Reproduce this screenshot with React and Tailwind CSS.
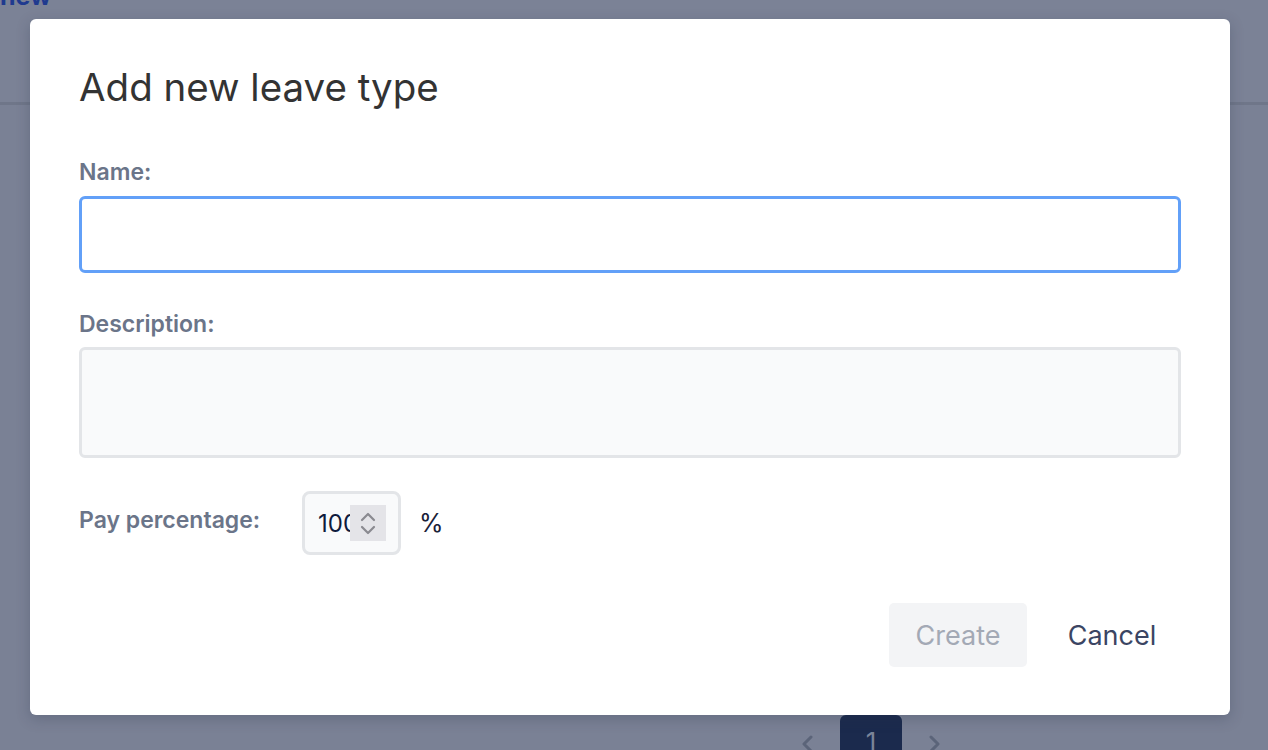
import React from "react";

function ChevronLeft({ className }) {
  return (
    <svg className={className} viewBox="0 0 24 24" fill="none" stroke="currentColor" strokeWidth="3" strokeLinecap="round" strokeLinejoin="round">
      <path d="M15 5l-7 7 7 7" />
    </svg>
  );
}
function ChevronRight({ className }) {
  return (
    <svg className={className} viewBox="0 0 24 24" fill="none" stroke="currentColor" strokeWidth="3" strokeLinecap="round" strokeLinejoin="round">
      <path d="M9 5l7 7-7 7" />
    </svg>
  );
}

export default function App() {
  return (
    <div className="relative w-[1268px] h-[750px] overflow-hidden bg-[#7a8195] font-['Inter',sans-serif]">
      {/* background page (dimmed) */}
      <div className="h-[105px] border-b-[3px] border-[#6f7689] bg-[#7b8296] flex flex-col">
        <div className="-mt-[19px] text-[25px] leading-[30px] font-bold text-[#1f3a8f]">new</div>
      </div>
      <div className="pt-[610px] pl-[796px] flex items-start">
        <ChevronLeft className="w-[24px] h-[24px] mt-[17px] text-[#5b6479]" />
        <div className="ml-[20px] w-[62px] h-[60px] rounded-t-[6px] bg-[#1b2a4d] flex justify-center pt-[12px] text-[26px] leading-[30px] text-[#7a8499]">1</div>
        <ChevronRight className="ml-[20px] w-[24px] h-[24px] mt-[17px] text-[#5b6479]" />
      </div>

      {/* modal */}
      <div className="absolute left-[30px] top-[19px] w-[1200px] h-[696px] bg-white rounded-[6px] shadow-[0_4px_14px_rgba(40,48,70,0.25)] px-[49px] pt-[45px] pb-[48px] flex flex-col">
        <h2 className="text-[38.5px] leading-[46px] text-[#333333] font-normal">Add new leave type</h2>

        <label className="mt-[48px] text-[23px] leading-[28px] font-semibold text-[#6b7589]">Name:</label>
        <div className="mt-[10px] h-[77px] rounded-[6px] border-[3px] border-[#62a0f8] bg-white"></div>

        <label className="mt-[37px] text-[23px] leading-[28px] font-semibold text-[#6b7589]">Description:</label>
        <div className="mt-[9px] h-[111px] rounded-[6px] border-[3px] border-[#e3e5e8] bg-[#f9fafb]"></div>

        <div className="mt-[33px] flex items-start">
          <div className="w-[223px] mt-[15px] text-[23px] leading-[28px] font-semibold text-[#6b7589]">Pay percentage:</div>
          <div className="w-[99px] h-[64px] rounded-[8px] border-[3px] border-[#e3e5e8] bg-[#f9fafb] flex items-center pl-[13px] pr-[12px]">
            <div className="w-[32px] overflow-hidden whitespace-nowrap text-[24px] leading-[30px] text-[#0f1b3d] pt-[1px]">100</div>
            <div className="w-[36px] h-[36px] bg-[#e4e4e8] flex flex-col items-center justify-center">
              <svg className="w-[20px] h-[12px]" viewBox="0 0 20 12" fill="none" stroke="#8a8a90" strokeWidth="2.2" strokeLinecap="round" strokeLinejoin="round">
                <path d="M4 9l6-6 6 6" />
              </svg>
              <svg className="w-[20px] h-[12px] mt-[1px]" viewBox="0 0 20 12" fill="none" stroke="#8a8a90" strokeWidth="2.2" strokeLinecap="round" strokeLinejoin="round">
                <path d="M4 3l6 6 6-6" />
              </svg>
            </div>
          </div>
          <div className="ml-[18px] mt-[17px] text-[25px] leading-[30px] text-[#1a2238]">%</div>
        </div>

        <div className="mt-[48px] flex justify-end gap-[16px]">
          <button className="w-[138px] h-[64px] rounded-[5px] bg-[#f3f4f6] text-[27px] leading-[32px] pt-[2px] text-[#a3a9b5]">Create</button>
          <button className="w-[138px] h-[64px] rounded-[5px] text-[27px] leading-[32px] pt-[2px] text-[#3b4563]">Cancel</button>
        </div>
      </div>
    </div>
  );
}
